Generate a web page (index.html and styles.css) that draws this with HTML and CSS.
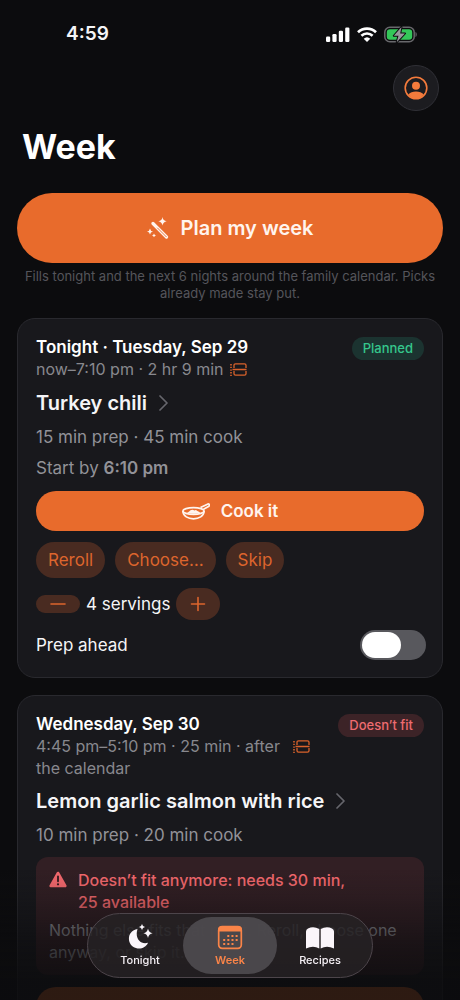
FILE: index.html
```html
<!DOCTYPE html>
<html lang="en">
<head>
<meta charset="utf-8">
<meta name="viewport" content="width=device-width, initial-scale=1">
<title>Week</title>
<link rel="stylesheet" href="styles.css">
</head>
<body>
<div class="screen">
  <header class="status">
    <time class="clock">4:59</time>
    <div class="indicators">
      <svg width="24" height="15" viewBox="0 0 24 15" fill="#fff" aria-hidden="true"><rect x="0" y="9.500" width="4.200" height="5.500" rx="1.200"/><rect x="6.400" y="7" width="4.200" height="8" rx="1.200"/><rect x="12.800" y="3.800" width="4.200" height="11.200" rx="1.200"/><rect x="19.200" y="0.500" width="4.200" height="14.500" rx="1.200"/></svg>
      <svg width="20" height="15" viewBox="0 0 20 15" aria-hidden="true"><g fill="none" stroke="#fff" stroke-width="2.700"><path d="M1 5.200a13 13 0 0 1 18 0"/><path d="M4.400 8.700a8.200 8.200 0 0 1 11.200 0"/></g><path fill="#fff" d="M10 15l-3.300-3.300a4.800 4.800 0 0 1 6.600 0z"/></svg>
      <svg width="34" height="17" viewBox="0 0 34 17" aria-hidden="true"><rect x="0.800" y="1.200" width="29.400" height="14.600" rx="5" fill="none" stroke="#68686c" stroke-width="1.500"/><rect x="2.800" y="3.200" width="25.400" height="10.600" rx="3.200" fill="#34c759"/><path d="M31.500 6v5c1.700-.6 1.700-4.400 0-5z" fill="#68686c"/><path d="M17.500 1 9.800 9.800h4.700L12.700 16.200l8.300-8.800h-4.800z" fill="#98989c" stroke="#0c0c0e" stroke-width="2" paint-order="stroke" stroke-linejoin="round"/></svg>
    </div>
  </header>

  <div class="toolbar">
    <button class="profile" aria-label="Profile">
      <svg width="24" height="24" viewBox="0 0 24 24" aria-hidden="true"><circle cx="12" cy="12" r="10.800" fill="none" stroke="#f47b3c" stroke-width="1.600"/><circle cx="12" cy="9.700" r="4" fill="#f47b3c"/><path d="M4.300 18.600c3-4 12.400-4 15.400 0C15.800 24.300 8.200 24.300 4.300 18.600z" fill="#f47b3c"/></svg>
    </button>
  </div>

  <main class="content">
    <h1 class="title">Week</h1>
    <button class="plan">
      <svg width="22" height="22" viewBox="0 0 22 22" aria-hidden="true"><g stroke="#fff4ee" stroke-linecap="round" fill="none"><path d="M6 6.500 19.500 20" stroke-width="3.200"/><path d="M10.500 11 19.300 19.800" stroke="#e86b2c" stroke-width="0.900"/></g><path fill="#fff4ee" d="M15.500 0q.5 3.700 4.200 4.300-3.700.6-4.200 4.300-.5-3.700-4.200-4.300 3.700-.6 4.200-4.300zM3 11.500q.4 2.600 3 3-2.600.4-3 3-.4-2.600-3-3 2.600-.4 3-3zM7 16.500q.3 1.600 1.900 1.900-1.600.3-1.900 1.900-.3-1.600-1.900-1.900 1.600-.3 1.900-1.900z"/></svg>
      Plan my week
    </button>
    <p class="hint">Fills tonight and the next 6 nights around the family calendar. Picks already made stay put.</p>

    <article class="card">
      <div class="head">
        <div class="when">
          <h2 class="day">Tonight · Tuesday, Sep 29</h2>
          <div class="slot"><span>now–7:10 pm · 2 hr 9 min</span>
            <svg class="slot-icon" width="17" height="13" viewBox="0 0 17 13" fill="none" stroke="#d9622b" stroke-width="1.300" aria-hidden="true"><path d="M4 5V2.200Q4 .8 5.500.8h9Q16 .8 16 2.200V5M4 8v2.800q0 1.400 1.500 1.400h9q1.500 0 1.500-1.400V8M2.500 6.500H16.500"/><path d="M1 1v12" stroke-width="1.600" stroke-dasharray="1.400 1.300"/></svg>
          </div>
        </div>
        <span class="badge planned">Planned</span>
      </div>
      <a class="recipe" href="#turkey-chili">Turkey chili
        <svg width="9" height="16" viewBox="0 0 9 16" fill="none" stroke="#66666c" stroke-width="1.700" stroke-linecap="round" stroke-linejoin="round" aria-hidden="true"><path d="M1 1l7 7-7 7"/></svg></a>
      <p class="meta">15 min prep · 45 min cook</p>
      <p class="meta">Start by <b>6:10 pm</b></p>
      <button class="cook">
        <svg width="28" height="17" viewBox="0 0 28 17" fill="none" stroke="#fff4ee" stroke-width="1.700" stroke-linejoin="round" aria-hidden="true"><path d="M21.500 6.200 27 3.200Q28 1 26 .9L18.500 4.600"/><ellipse cx="11.500" cy="8" rx="10.600" ry="3.400"/><path d="M.9 8c.3 10.500 20.900 10.500 21.200 0"/><path fill="#fff4ee" stroke="none" d="M5 9.500q2-.5 3.500-2.200 2-1.200 4 .2 1.500-1 2.500.2l3.500 1.800q-6.500 2.500-13.500 0z"/></svg>
        Cook it
      </button>
      <div class="actions">
        <button class="chip">Reroll</button>
        <button class="chip">Choose…</button>
        <button class="chip">Skip</button>
      </div>
      <div class="servings">
        <button class="step minus" aria-label="Fewer servings"><svg width="16" height="16" viewBox="0 0 16 16" stroke="#dd652d" stroke-width="1.600" stroke-linecap="round" aria-hidden="true"><path d="M1 8h14"/></svg></button>
        <span>4 servings</span>
        <button class="step plus" aria-label="More servings"><svg width="16" height="16" viewBox="0 0 16 16" stroke="#dd652d" stroke-width="1.600" stroke-linecap="round" aria-hidden="true"><path d="M1.500 8h13M8 1.500v13"/></svg></button>
      </div>
      <label class="prep">Prep ahead <input class="switch" type="checkbox" role="switch"></label>
    </article>

    <article class="card">
      <div class="head">
        <div class="when">
          <h2 class="day">Wednesday, Sep 30</h2>
          <div class="slot late"><span>4:45 pm–5:10 pm · 25 min · after the calendar</span>
            <svg class="slot-icon" width="17" height="13" viewBox="0 0 17 13" fill="none" stroke="#d9622b" stroke-width="1.300" aria-hidden="true"><path d="M4 5V2.200Q4 .8 5.500.8h9Q16 .8 16 2.200V5M4 8v2.800q0 1.400 1.500 1.400h9q1.500 0 1.500-1.400V8M2.500 6.500H16.500"/><path d="M1 1v12" stroke-width="1.600" stroke-dasharray="1.400 1.300"/></svg>
          </div>
        </div>
        <span class="badge misfit">Doesn’t fit</span>
      </div>
      <a class="recipe" href="#lemon-garlic-salmon">Lemon garlic salmon with rice
        <svg width="9" height="16" viewBox="0 0 9 16" fill="none" stroke="#66666c" stroke-width="1.700" stroke-linecap="round" stroke-linejoin="round" aria-hidden="true"><path d="M1 1l7 7-7 7"/></svg></a>
      <p class="meta">10 min prep · 20 min cook</p>
      <section class="warning">
        <div class="alert">
          <svg width="18" height="17" viewBox="0 0 18 17" aria-hidden="true"><path d="M9 2 16.300 15H1.700z" fill="#f4696e" stroke="#f4696e" stroke-width="2.600" stroke-linejoin="round"/><path d="M9 5.500v4.800" stroke="#30191d" stroke-width="1.800" stroke-linecap="round"/><circle cx="9" cy="13.300" r="1.100" fill="#30191d"/></svg>
          <p>Doesn’t fit anymore: needs 30 min, 25 available</p>
        </div>
        <p class="advice">Nothing else fits that night. Reroll, choose one anyway, or skip it.</p>
      </section>
      <button class="cook" aria-label="Cook it"></button>
    </article>
  </main>

  <div class="fade"></div>
  <nav class="tabs">
    <a class="tab" href="#tonight">
      <svg width="26" height="26" viewBox="0 0 26 26" fill="#faf5fa" aria-hidden="true"><path d="M10.500 5C3.800 6 .8 12 2.300 17.500c2.200 8.200 15 10 18.700 1.300C13.500 21 7.500 14.500 10.500 5z"/><path d="M15 0q.5 2.500 3 3-2.500.5-3 3-.5-2.500-3-3 2.500-.5 3-3zM21 4.500q.7 4 4.700 4.700-4 .7-4.700 4.700-.7-4-4.700-4.700 4-.7 4.700-4.700z"/></svg>
      Tonight
    </a>
    <a class="tab current" href="#week" aria-current="page">
      <svg width="26" height="26" viewBox="0 0 26 26" aria-hidden="true"><rect x="1.700" y="2.700" width="22.600" height="21.600" rx="3.500" fill="none" stroke="#fa8448" stroke-width="1.700"/><path d="M1 7.500V5.500q0-3.500 3.500-3.500h17q3.500 0 3.500 3.500v2z" fill="#fa8448"/><path d="M10.300 12h10.500M6.200 16h14.500M6.200 20h10.500" stroke="#fa8448" stroke-width="2" stroke-dasharray="2 2.150"/></svg>
      Week
    </a>
    <a class="tab" href="#recipes">
      <svg width="30" height="26" viewBox="0 0 30 26" fill="#faf5fa" aria-hidden="true"><path d="M14.300 5v19.500q-6-3.500-13.300 0V7.500q0-2 2-3 5.500-2.500 11.300.5zM15.700 5v19.500q6-3.500 13.300 0V7.500q0-2-2-3-5.500-2.500-11.300.5z"/></svg>
      Recipes
    </a>
  </nav>
</div>
</body>
</html>
```
FILE: styles.css
```css
* { box-sizing: border-box; margin: 0; }
html { background: #0c0c0e; }
body { font-family: Inter, "Liberation Sans", sans-serif; font-size: 17px; line-height: 22px; color: #f5f5f7; }
button { border: 0; padding: 0; font: inherit; cursor: pointer; }
a { color: inherit; text-decoration: none; }
svg { flex: none; display: block; }

.screen { height: 100vh; overflow: hidden; }
.status { display: flex; justify-content: space-between; align-items: center; padding: 22px 42px 0 66px; height: 46px; }
.clock { font-size: 19px; font-weight: 600; }
.indicators { display: flex; align-items: center; gap: 7px; }

.toolbar { display: flex; justify-content: flex-end; padding: 19px 21px 0; }
.profile { width: 46px; height: 46px; border-radius: 50%; background: #1c1c20; border: 1px solid #303036; display: grid; place-items: center; }

.content { padding: 14px 17px 0; }
.title { padding-left: 5px; font-size: 34px; line-height: 44px; font-weight: 700; color: #fff; }
.plan { display: flex; align-items: center; justify-content: center; gap: 12px; width: 100%; height: 70px; margin-top: 24px; border-radius: 35px; background: #e86b2c; color: #fff4ee; font-size: 20px; font-weight: 600; }
.hint { padding: 5px 4px 0; text-align: center; font-size: 13px; line-height: 17px; color: #55555b; }

.card { margin-top: 16px; padding: 17px 18px; border: 1px solid #29292e; border-radius: 18px; background: #18181c; }
.card + .card { margin-top: 17px; }
.head { display: flex; justify-content: space-between; align-items: flex-start; gap: 28px; }
.day { font-size: 17px; line-height: 22px; font-weight: 600; color: #fff; }
.slot { display: flex; align-items: center; gap: 6px; font-size: 16px; line-height: 23px; color: #88888e; }
.late { align-items: flex-start; line-height: 22px; }
.late .slot-icon { margin-top: 5px; }
.badge { flex: none; margin-top: 1px; padding: 0 11px; border-radius: 12px; font-size: 13px; line-height: 23px; font-weight: 500; }
.planned { background: #1b3330; color: #35c78c; }
.misfit { background: #3c2327; color: #ee6b70; }
.recipe { display: flex; align-items: center; gap: 12px; margin-top: 8px; font-size: 20px; line-height: 28px; font-weight: 600; }
.late-recipe { margin-top: 9px; }
.meta { margin-top: 9px; color: #929298; }
.meta b { font-weight: 600; }
.cook { display: flex; align-items: center; justify-content: center; gap: 11px; width: 100%; height: 40px; margin-top: 12px; border-radius: 20px; background: #e86b2c; color: #fff4ee; font-size: 17px; font-weight: 600; }
.actions { display: flex; gap: 10px; margin-top: 11px; }
.chip { height: 36px; padding: 0 12px; border-radius: 18px; background: #492b21; color: #dd652d; }
.servings { display: flex; align-items: center; gap: 6px; margin-top: 10px; }
.step { display: grid; place-items: center; width: 44px; background: #492b21; }
.minus { height: 18px; border-radius: 9px; }
.plus { height: 32px; border-radius: 16px; }
.prep { display: flex; align-items: center; justify-content: space-between; margin-top: 10px; }
.switch { appearance: none; display: flex; width: 66px; height: 30px; margin: 0 -2px 0 0; padding: 2px; border-radius: 15px; background: #58585d; }
.switch::before { content: ""; width: 39px; border-radius: 13px; background: #fff; }
.switch:checked { justify-content: flex-end; background: #34c759; }

.warning { margin-top: 11px; padding: 12px 13px; border-radius: 12px; background: #321f24; }
.alert { display: flex; gap: 11px; padding-right: 56px; font-size: 16px; font-weight: 500; color: #f4696e; }
.alert svg { margin-top: 2px; }
.advice { margin-top: 6px; font-size: 16px; color: #929298; }

.fade { position: fixed; left: 0; right: 0; bottom: 0; height: 130px; background: linear-gradient(rgba(12,12,14,0), rgba(12,12,14,.15) 20%, rgba(12,12,14,.6) 55%, rgba(12,12,14,.85) 85%); pointer-events: none; }
.tabs { position: fixed; left: 50%; bottom: 22px; transform: translateX(-50%); display: flex; width: 286px; height: 65px; padding: 3px 5px; border: 1px solid #4d454b; border-radius: 33px; background: rgba(38,34,37,.82); }
.tab { flex: 1; display: flex; flex-direction: column; align-items: center; justify-content: center; gap: 3px; border-radius: 29px; font-size: 11px; line-height: 14px; font-weight: 500; color: #f5f0f5; }
.current { margin: 0 -4px; background: rgba(78,75,79,.92); color: #fa8448; font-weight: 600; }
```
